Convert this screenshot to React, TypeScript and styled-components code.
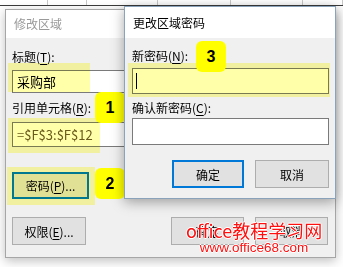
import React from "react";
import styled, { createGlobalStyle } from "styled-components";

const GlobalStyle = createGlobalStyle`
  html, body { margin: 0; padding: 0; background: #ffffff; }
  body { font-family: "Noto Sans CJK SC", "Microsoft YaHei", sans-serif; font-size: 12px; color: #000; }
  * { box-sizing: border-box; }
`;

const Canvas = styled.div`
  position: relative;
  width: 343px;
  height: 267px;
  overflow: hidden;
  background: #ffffff;
`;

const SheetHeader = styled.div`
  display: flex;
  height: 6px;
  border-bottom: 1.5px solid #3c3c3c;
`;

const HeaderCell = styled.div<{ $w: number }>`
  width: ${(p) => p.$w}px;
  flex: none;
  border-right: 1px solid #c8c8c8;
`;

const Window = styled.div<{ $x: number; $y: number; $w: number; $h: number; $active?: boolean }>`
  position: absolute;
  left: ${(p) => p.$x}px;
  top: ${(p) => p.$y}px;
  width: ${(p) => p.$w}px;
  height: ${(p) => p.$h}px;
  display: flex;
  flex-direction: column;
  background: #f0f0f0;
  border: 1px solid ${(p) => (p.$active ? "#8aa3bb" : "#a6a6a6")};
  box-shadow: ${(p) =>
    p.$active ? "0 3px 12px rgba(0,0,0,0.35)" : "0 3px 10px rgba(0,0,0,0.25)"};
`;

const TitleBar = styled.div<{ $h: number; $inactive?: boolean }>`
  height: ${(p) => p.$h}px;
  flex: none;
  display: flex;
  align-items: center;
  padding-left: 8px;
  background: #ffffff;
  color: ${(p) => (p.$inactive ? "#9a9a9a" : "#000000")};
  font-size: 12px;
  line-height: 16px;
`;

const Body = styled.div<{ $pad: string }>`
  flex: 1;
  display: flex;
  flex-direction: column;
  padding: ${(p) => p.$pad};
`;

const Label = styled.div<{ $mt: number }>`
  margin-top: ${(p) => p.$mt}px;
  height: 16px;
  line-height: 16px;
  font-size: 12px;
  white-space: nowrap;
  u { text-decoration-thickness: 1px; text-underline-offset: 2px; }
`;

const TextBox = styled.div<{ $mt: number; $h: number; $color?: string }>`
  margin-top: ${(p) => p.$mt}px;
  height: ${(p) => p.$h}px;
  flex: none;
  display: flex;
  align-items: center;
  padding-left: 4px;
  background: #ffffff;
  border: 1px solid #7a7a7a;
  color: ${(p) => p.$color || "#000"};
  font-size: 13px;
  white-space: nowrap;
`;

const Caret = styled.div`
  width: 1px;
  height: 16px;
  margin-left: -1px;
  background: #000;
`;

const Button = styled.div<{ $w: number; $h: number; $mt?: number; $focused?: boolean }>`
  width: ${(p) => p.$w}px;
  height: ${(p) => p.$h}px;
  margin-top: ${(p) => p.$mt || 0}px;
  flex: none;
  display: flex;
  align-items: center;
  justify-content: center;
  background: #e1e1e1;
  border: ${(p) => (p.$focused ? "2px solid #0078d7" : "1px solid #adadad")};
  font-size: 12px;
  white-space: nowrap;
  u { text-decoration-thickness: 1px; text-underline-offset: 2px; }
`;

const ButtonRow = styled.div<{ $mt: number; $justify: string }>`
  margin-top: ${(p) => p.$mt}px;
  display: flex;
  justify-content: ${(p) => p.$justify};
  gap: 11px;
`;

const ButtonPair = styled.div`
  display: flex;
  gap: 11px;
`;

const Highlight = styled.div<{ $x: number; $y: number; $w: number; $h: number }>`
  position: absolute;
  left: ${(p) => p.$x}px;
  top: ${(p) => p.$y}px;
  width: ${(p) => p.$w}px;
  height: ${(p) => p.$h}px;
  background: #ffffaa;
  mix-blend-mode: multiply;
  pointer-events: none;
`;

const Badge = styled.div<{ $x: number; $y: number }>`
  position: absolute;
  left: ${(p) => p.$x}px;
  top: ${(p) => p.$y}px;
  width: 30px;
  height: 31px;
  border-radius: 6px;
  background: #ffff00;
  display: flex;
  align-items: center;
  justify-content: center;
  font-family: "Liberation Sans", Arial, sans-serif;
  font-weight: bold;
  font-size: 16px;
  color: #000;
`;

const Watermark = styled.div`
  position: absolute;
  left: 186px;
  top: 218px;
  display: flex;
  flex-direction: column;
  align-items: center;
  color: #ff1010;
  text-shadow: 0 0 1px #fff, 1px 0 0 #fff, -1px 0 0 #fff, 0 1px 0 #fff, 0 -1px 0 #fff;
  pointer-events: none;
`;

const WatermarkTitle = styled.div`
  font-family: "Noto Sans CJK SC", sans-serif;
  font-size: 18px;
  line-height: 24px;
  white-space: nowrap;
`;

const WatermarkUrl = styled.div`
  font-family: "Liberation Sans", Arial, sans-serif;
  font-size: 13.5px;
  line-height: 14px;
  margin-top: -1px;
  white-space: nowrap;
`;

export default function App() {
  return (
    <>
      <GlobalStyle />
      <Canvas>
        <SheetHeader>
          {[48, 39, 71, 73, 72, 40].map((w, i) => (
            <HeaderCell key={i} $w={w} />
          ))}
        </SheetHeader>

        <Window $x={5} $y={9} $w={331} $h={249}>
          <TitleBar $h={28} $inactive>修改区域</TitleBar>
          <Body $pad="11px 7px 0 6px">
            <Label $mt={0}>
              标题(<u>T</u>):
            </Label>
            <TextBox $mt={5} $h={23}>采购部</TextBox>
            <Label $mt={7}>
              引用单元格(<u>R</u>):
            </Label>
            <TextBox $mt={6} $h={25} $color="#6a5a28">
              =$F$3:$F$12
            </TextBox>
            <Button $w={77} $h={27} $mt={25} $focused>
              密码(<u>P</u>)...
            </Button>
            <ButtonRow $mt={18} $justify="space-between">
              <Button $w={74} $h={28}>
                权限(<u>E</u>)...
              </Button>
              <ButtonPair>
                <Button $w={73} $h={28}>确定</Button>
                <Button $w={73} $h={28}>取消</Button>
              </ButtonPair>
            </ButtonRow>
          </Body>
        </Window>

        <Highlight $x={8} $y={63} $w={82} $h={29} />
        <Highlight $x={8} $y={118} $w={92} $h={35} />
        <Highlight $x={7} $y={167} $w={88} $h={38} />

        <Badge $x={95} $y={92}>1</Badge>
        <Badge $x={95} $y={168}>2</Badge>

        <Window $x={124} $y={6} $w={212} $h={193} $active>
          <TitleBar $h={31}>更改区域密码</TitleBar>
          <Body $pad="10px 6px 0 7px">
            <Label $mt={0}>
              新密码(<u>N</u>):
            </Label>
            <TextBox $mt={4} $h={26}>
              <Caret />
            </TextBox>
            <Label $mt={6}>
              确认新密码(<u>C</u>):
            </Label>
            <TextBox $mt={2} $h={27} />
            <ButtonRow $mt={15} $justify="flex-end">
              <Button $w={72} $h={28} $focused>确定</Button>
              <Button $w={74} $h={28}>取消</Button>
            </ButtonRow>
          </Body>
        </Window>

        <Highlight $x={128} $y={63} $w={202} $h={34} />
        <Badge $x={196} $y={41}>3</Badge>

        <Watermark>
          <WatermarkTitle>office教程学习网</WatermarkTitle>
          <WatermarkUrl>www.office68.com</WatermarkUrl>
        </Watermark>
      </Canvas>
    </>
  );
}
